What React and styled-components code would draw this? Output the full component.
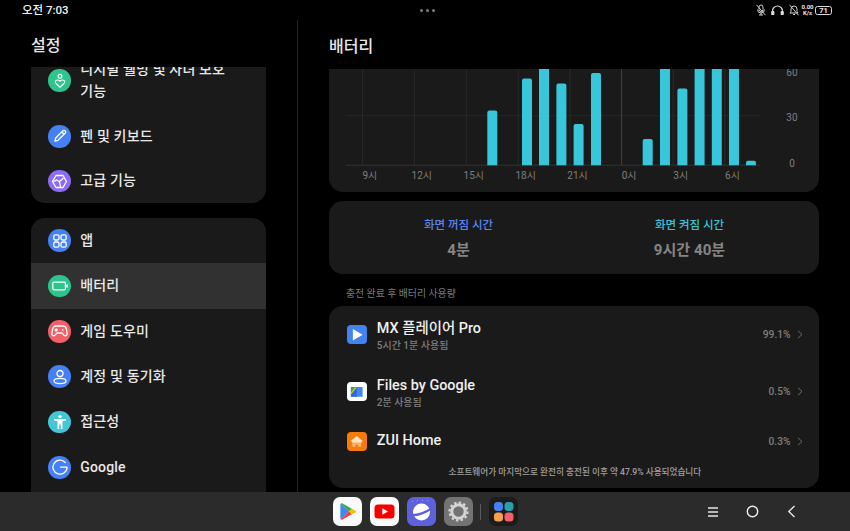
import React from 'react';
import styled, { createGlobalStyle } from 'styled-components';

const Global = createGlobalStyle`
  html, body { margin: 0; padding: 0; background: #000; }
  body { font-family: Roboto, "Noto Sans CJK KR", sans-serif; color: #fff; }
  * { box-sizing: border-box; }
`;

const Screen = styled.div`
  width: 850px; height: 531px; overflow: hidden; background: #000;
  display: flex; flex-direction: column;
`;
const StatusBar = styled.div`
  height: 20px; flex: none; display: grid; grid-template-columns: 1fr auto 1fr; align-items: center;
  padding: 0 18px 0 22px;
`;
const Clock = styled.div`font-size: 11.5px; font-weight: 500; color: #f2f2f2; line-height: 20px;`;
const Dots = styled.div`
  display: flex; gap: 3px; margin-top: 1px;
  span { width: 3px; height: 3px; border-radius: 50%; background: #7c7c7c; }
`;
const StatusIcons = styled.div`display: flex; align-items: center; justify-content: flex-end; gap: 4px;`;
const Speed = styled.div`
  font-size: 6px; font-weight: 700; line-height: 6px; text-align: center; color: #e6e6e6; width: 14px; margin: 0 -3.5px 0 -3.5px;
`;
const BatteryBox = styled.div`
  width: 17px; height: 9px; border: 1px solid #dcdcdc; border-radius: 2.5px;
  font-size: 7.5px; font-weight: 700; line-height: 7px; text-align: center; color: #eee;
`;

const Main = styled.div`flex: 1; min-height: 0; display: flex;`;
const Sidebar = styled.div`
  width: 298px; flex: none; border-right: 1px solid #232323; padding-left: 31px; display: flex; flex-direction: column;
`;
const PageTitle = styled.div`
  height: ${p => p.$h}px; flex: none; display: flex; align-items: center; font-size: 16px; font-weight: 500; color: #e8e8e8;
`;
const SideScroll = styled.div`flex: 1; min-height: 0; overflow: hidden; width: 235px;`;
const SideInner = styled.div`margin-top: -19.3px; display: flex; flex-direction: column; gap: 14.7px;`;
const SideCard = styled.div`background: #1a1a1a; border-radius: 14px; overflow: hidden; flex: none;`;
const SideRow = styled.div`
  display: flex; align-items: center; gap: 9.5px; padding: 0 20px 0 17.3px;
  height: ${p => p.$h || 45.33}px;
  background: ${p => p.$active ? '#313131' : 'transparent'};
`;
const RoundIcon = styled.div`
  width: 22.5px; height: 22.5px; border-radius: 50%; flex: none; background: ${p => p.$c};
  display: flex; align-items: center; justify-content: center;
`;
const SideLabel = styled.div`font-size: 14px; font-weight: 500; color: #e9e9e9; line-height: 21.5px; letter-spacing: 0.15px;`;

const Content = styled.div`flex: 1; min-width: 0; padding: 0 31px; display: flex; flex-direction: column;`;
const ChartCard = styled.div`
  height: 122.7px; flex: none; background: #1a1a1a; border-radius: 0 0 14px 14px; overflow: hidden; margin-bottom: 9px;
  svg { display: block; }
  text { font-family: Roboto, "Noto Sans CJK KR", sans-serif; font-size: 10px; fill: #7f7f7f; }
`;
const StatsCard = styled.div`
  height: 72.7px; flex: none; background: #1a1a1a; border-radius: 14px; padding: 0 14px;
  display: grid; grid-template-columns: 1fr 1fr; align-items: center;
`;
const Stat = styled.div`text-align: center; display: flex; flex-direction: column; gap: 5px; margin-top: 4px;`;
const StatLabel = styled.div`font-size: 11.5px; font-weight: 500; line-height: 17px; color: ${p => p.$c};`;
const StatValue = styled.div`font-size: 15.1px; font-weight: 700; line-height: 22px; color: #858585;`;
const Caption = styled.div`
  height: 32.3px; flex: none; padding: 6px 0 0 17px; display: flex; align-items: center; font-size: 9.9px; color: #7d7d7d;
`;
const ListCard = styled.div`height: 182px; flex: none; background: #1a1a1a; border-radius: 14px; padding: 0 16.5px 0 18.3px;`;
const AppRow = styled.div`display: flex; align-items: center; height: ${p => p.$h}px;`;
const AppIcon = styled.div`
  width: 19.5px; height: 19.5px; border-radius: 4px; flex: none; overflow: hidden; background: ${p => p.$c};
  svg { display: block; }
`;
const AppText = styled.div`margin-left: 10px; flex: 1; padding-top: ${p => p.$pt || 0}px;`;
const AppName = styled.div`font-size: 14.4px; font-weight: 500; line-height: 18px; color: #f0f0f0;`;
const AppSub = styled.div`font-size: 10px; line-height: 15px; color: #7e7e7e; font-weight: 500;`;
const Percent = styled.div`font-size: 10.2px; font-weight: 500; color: #7e7e7e; margin-right: 6px;`;
const Footnote = styled.div`font-size: 8.65px; text-align: center; color: #a0a0a0; line-height: 18px; font-weight: 500;`;

const BottomBar = styled.div`
  height: 39px; flex: none; background: #2b2b2b; display: flex; align-items: center; padding: 0 51px 0 332.7px;
`;
const Dock = styled.div`display: flex; align-items: center; gap: 8px;`;
const DockIcon = styled.div`
  width: 29px; height: 29px; border-radius: 7px; flex: none; overflow: hidden; background: ${p => p.$c};
  svg { display: block; }
`;
const DockSep = styled.div`width: 1px; height: 16px; background: #5a5a5a; margin-left: -1px;`;
const NavGroup = styled.div`margin-left: auto; display: flex; align-items: center; gap: 27px;`;

const S = { fill: 'none', stroke: '#fff', strokeWidth: 1.2, strokeLinecap: 'round', strokeLinejoin: 'round' };

const sideIcons = {
  wellbeing: <svg width="16" height="16" viewBox="0 0 16 16" {...S}><circle cx="8" cy="3.2" r="1.9" /><path d="M8 14.2 3.9 10.2C2 8 4.9 5.6 8 8.2c3.1-2.6 6 -.2 4.1 2z" /></svg>,
  pen: <svg width="16" height="16" viewBox="0 0 16 16" {...S} strokeWidth="1.3"><path d="M3 13l.7-3L11 2.7a1.4 1.4 0 0 1 2 0l.3.3a1.4 1.4 0 0 1 0 2L6 12.3z" /><path d="M9.8 4l2.2 2.2" /></svg>,
  cube: <svg width="17" height="17" viewBox="0 0 17 17" {...S} strokeWidth="1.3"><path d="M5 2.5h7l3.5 6-3.5 6H5l-3.5-6z" /><path d="M5.500 7 8.500 8.500 12 5.500M8.500 8.500 9.500 14M5.500 7 3 8.500" /></svg>,
  apps: <svg width="16" height="16" viewBox="0 0 16 16" {...S} strokeWidth="1.3"><rect x="1.8" y="1.8" width="5.2" height="5.2" rx="1.5" /><rect x="9" y="1.8" width="5.2" height="5.2" rx="1.5" /><rect x="1.8" y="9" width="5.2" height="5.2" rx="1.5" /><rect x="9" y="9" width="5.2" height="5.2" rx="1.5" /></svg>,
  battery: <svg width="16" height="12" viewBox="0 0 16 12" {...S} strokeWidth="1.2"><rect x=".8" y="2.2" width="12.6" height="7.6" rx="1.2" /><path d="M15 5v2" strokeWidth="1.5" /></svg>,
  game: <svg width="17" height="15" viewBox="0 0 17 15" {...S} strokeWidth="1.3"><path d="M5 2h7c2 0 3.2 1.5 3.6 4l.5 3.5c.3 2-2 3-3.2 1.6L11 9H6l-1.900 2.100C2.900 12.500.6 11.500.9 9.500L1.400 6C1.800 3.500 3 2 5 2z" /><path d="M5.200 4.800v2.400M4 6h2.400" /><path d="M11.500 6h.6" /></svg>,
  person: <svg width="16" height="16" viewBox="0 0 16 16" {...S} strokeWidth="1.3"><circle cx="8" cy="4.500" r="3" /><ellipse cx="8" cy="12" rx="6" ry="2.600" /></svg>,
  access: <svg width="16" height="16" viewBox="0 0 16 16"><circle cx="8" cy="2.600" r="1.700" fill="#fff" /><path d="M2 5h12v1.500l-3.500.8V15H8.800v-4.500H7.200V15H5.500V7.300L2 6.500z" fill="#fff" /></svg>,
  google: <svg width="18" height="18" viewBox="0 0 18 18" {...S} strokeWidth="1.300"><path d="M14.200 4.500A7 7 0 1 0 16 9.200H9.500" /></svg>,
};

const bars = [
  [487.3, 110.7], [522, 78.7], [539, 60], [556.4, 83.7], [573.6, 124.3], [591, 73.3],
  [642.7, 139.3], [660, 60], [677.4, 88.7], [694.6, 60], [711.8, 60], [729, 60], [746, 161],
];
const grid = [362.4, 414.3, 466.3, 518.2, 570, 621.6, 673.2, 725];
const hours = ['9시', '12시', '15시', '18시', '21시', '0시', '3시', '6시'];
const ox = 329, oy = 69.3;

function Chart() {
  return (
    <svg width="490" height="122.7" viewBox="0 0 490 122.7">
      <path d={`M${345.6 - ox} ${116 - oy}H${759.5 - ox}`} stroke="#262626" strokeWidth="1" />
      {grid.map((x, i) => (
        <path key={x} d={`M${x - ox} 0V${165.5 - oy}`} stroke={i === 5 ? '#444' : '#2a2a2a'} strokeWidth="1" />
      ))}
      <path d={`M${345.6 - ox} ${165.5 - oy}H${759.5 - ox}`} stroke="#343434" strokeWidth="1" />
      {bars.map(([x, top]) => {
        const y = top - oy, h = 165.5 - top;
        return <path key={x} d={`M${x - ox} ${y + h}V${y + 2}q0-2 2-2h6q2 0 2 2V${y + h}z`} fill="#37c6da" />;
      })}
      {hours.map((t, i) => (
        <text key={t} x={grid[i] - ox + 7.5} y={179 - oy} textAnchor="middle">{t}</text>
      ))}
      <text x={792 - ox} y={76 - oy} textAnchor="middle">60</text>
      <text x={792 - ox} y={121.5 - oy} textAnchor="middle">30</text>
      <text x={792 - ox} y={167.5 - oy} textAnchor="middle">0</text>
    </svg>
  );
}

const MutedMic = () => (
  <svg width="12" height="12" viewBox="0 0 12 12" fill="none" stroke="#cfcfcf" strokeWidth="1"><rect x="4" y="1" width="4" height="6.500" rx="2" /><path d="M2.500 5.500a3.500 3.500 0 0 0 7 0M6 9v2M4 11h4M1.500 .8l9 10.400" /></svg>
);
const Headset = () => (
  <svg width="13" height="12" viewBox="0 0 13 12" fill="none" stroke="#dcdcdc" strokeWidth="1.200"><path d="M1.500 9V7a5 5 0 0 1 10 0v2" /><rect x=".8" y="7.500" width="2" height="3" rx=".6" fill="#dcdcdc" /><rect x="10.200" y="7.500" width="2" height="3" rx=".6" fill="#dcdcdc" /></svg>
);
const BellOff = () => (
  <svg width="12" height="12" viewBox="0 0 12 12" fill="none" stroke="#cfcfcf" strokeWidth="1"><path d="M2 9h8L9 7.500V5a3 3 0 0 0-6 0v2.500zM5 10.500h2M1.500 .8l9 10.400" /></svg>
);

function Chevron() {
  return (
    <svg width="6" height="9" viewBox="0 0 6 9" fill="none" stroke="#6e6e6e" strokeWidth="1"><path d="M1 .8 5 4.500 1 8.200" /></svg>
  );
}

export default function App() {
  return (
    <Screen>
      <Global />
      <StatusBar>
        <Clock>오전 7:03</Clock>
        <Dots><span /><span /><span /></Dots>
        <StatusIcons>
          <MutedMic /><Headset /><BellOff />
          <Speed>0.00<br />K/s</Speed>
          <BatteryBox>71</BatteryBox>
        </StatusIcons>
      </StatusBar>
      <Main>
        <Sidebar>
          <PageTitle $h={47}>설정</PageTitle>
          <SideScroll>
            <SideInner>
              <SideCard>
                <SideRow $h={66}>
                  <RoundIcon $c="#2dc48d">{sideIcons.wellbeing}</RoundIcon>
                  <SideLabel>디지털 웰빙 및 자녀 보호<br />기능</SideLabel>
                </SideRow>
                <SideRow>
                  <RoundIcon $c="#4680f5">{sideIcons.pen}</RoundIcon>
                  <SideLabel>펜 및 키보드</SideLabel>
                </SideRow>
                <SideRow $h={44.3}>
                  <RoundIcon $c="#8c6cf5">{sideIcons.cube}</RoundIcon>
                  <SideLabel>고급 기능</SideLabel>
                </SideRow>
              </SideCard>
              <SideCard>
                <SideRow><RoundIcon $c="#4680f5">{sideIcons.apps}</RoundIcon><SideLabel>앱</SideLabel></SideRow>
                <SideRow $active><RoundIcon $c="#2dc48d">{sideIcons.battery}</RoundIcon><SideLabel>배터리</SideLabel></SideRow>
                <SideRow><RoundIcon $c="#f4606a">{sideIcons.game}</RoundIcon><SideLabel>게임 도우미</SideLabel></SideRow>
                <SideRow><RoundIcon $c="#4680f5">{sideIcons.person}</RoundIcon><SideLabel>계정 및 동기화</SideLabel></SideRow>
                <SideRow><RoundIcon $c="#42c6d8">{sideIcons.access}</RoundIcon><SideLabel>접근성</SideLabel></SideRow>
                <SideRow><RoundIcon $c="#4680f5">{sideIcons.google}</RoundIcon><SideLabel>Google</SideLabel></SideRow>
                <SideRow />
              </SideCard>
            </SideInner>
          </SideScroll>
        </Sidebar>
        <Content>
          <PageTitle $h={49.3}>배터리</PageTitle>
          <ChartCard><Chart /></ChartCard>
          <StatsCard>
            <Stat><StatLabel $c="#5b86f5">화면 꺼짐 시간</StatLabel><StatValue>4분</StatValue></Stat>
            <Stat><StatLabel $c="#3cc4d6">화면 켜짐 시간</StatLabel><StatValue>9시간 40분</StatValue></Stat>
          </StatsCard>
          <Caption>충전 완료 후 배터리 사용량</Caption>
          <ListCard>
            <AppRow $h={57}>
              <AppIcon $c="#4283ee">
                <svg width="19.5" height="19.5" viewBox="0 0 20 20"><path d="M6 4v12l10-6z" fill="#fff" /></svg>
              </AppIcon>
              <AppText $pt={4}><AppName>MX 플레이어 Pro</AppName><AppSub>5시간 1분 사용됨</AppSub></AppText>
              <Percent>99.1%</Percent>
              <Chevron />
            </AppRow>
            <AppRow $h={57}>
              <AppIcon $c="#fff">
                <svg width="19.5" height="19.5" viewBox="0 0 20 20">
                  <path d="M4 5h12v10H4z" fill="#4285f4" />
                  <path d="M4 5h5l1 1v0L4 13z" fill="#34a853" />
                  <path d="M8 6l2 0-6 7v-2z" fill="#fbbc04" />
                  <path d="M4 13l6-7v9H4z" fill="#3367d6" />
                </svg>
              </AppIcon>
              <AppText $pt={4}><AppName>Files by Google</AppName><AppSub>2분 사용됨</AppSub></AppText>
              <Percent>0.5%</Percent>
              <Chevron />
            </AppRow>
            <AppRow $h={43}>
              <AppIcon $c="#f57c0a">
                <svg width="19.5" height="19.5" viewBox="0 0 20 20"><path d="M10 4l6.500 5.500H15V11H5V9.500H3.500z" fill="#ffe2c2" /><path d="M5.500 11.500h9V15h-3.200v-2.200H8.700V15H5.500z" fill="#ffb676" /></svg>
              </AppIcon>
              <AppText><AppName>ZUI Home</AppName></AppText>
              <Percent>0.3%</Percent>
              <Chevron />
            </AppRow>
            <Footnote>소프트웨어가 마지막으로 완전히 충전된 이후 약 47.9% 사용되었습니다</Footnote>
          </ListCard>
        </Content>
      </Main>
      <BottomBar>
        <Dock>
          <DockIcon $c="#fafafa">
            <svg width="29" height="29" viewBox="0 0 29 29">
              <path d="M8 6.500 16 14.500 8 22.500c-.4-.3-.6-.7-.6-1.200V7.700c0-.5.2-.9.600-1.200z" fill="#4285f4" />
              <path d="M8 6.500c.5-.3 1-.3 1.600 0L18.800 11.800 16 14.500z" fill="#34a853" />
              <path d="M18.800 11.800 22.300 13.700c1 .6 1 1.100 0 1.700L18.800 17.300 16 14.500z" fill="#fbbc04" />
              <path d="M8 22.500c.5.300 1 .300 1.600 0L18.800 17.300 16 14.500z" fill="#ea4335" />
            </svg>
          </DockIcon>
          <DockIcon $c="#fafafa">
            <svg width="29" height="29" viewBox="0 0 29 29">
              <rect x="4.500" y="7.500" width="20" height="14" rx="3.500" fill="#f40000" />
              <path d="M12.300 11.200v6.600l5.700-3.300z" fill="#fff" />
            </svg>
          </DockIcon>
          <DockIcon $c="#5d62dc">
            <svg width="29" height="29" viewBox="0 0 29 29">
              <circle cx="14.500" cy="15" r="8.500" fill="#fff" />
              <path d="M3 18C10 19 20 15.500 26.500 9.500" fill="none" stroke="#5d62dc" strokeWidth="2.200" />
              <path d="M5 4.300h1M10 3.500h1M15 3.200h1M20 3.500h1" stroke="#a9abf0" strokeWidth=".8" />
            </svg>
          </DockIcon>
          <DockIcon $c="#737373">
            <svg width="29" height="29" viewBox="0 0 29 29">
              <circle cx="14.500" cy="14.500" r="6.700" fill="none" stroke="#d4d4d4" strokeWidth="3" />
              <circle cx="14.500" cy="14.500" r="9" fill="none" stroke="#d4d4d4" strokeWidth="2.200" strokeDasharray="2.500 2.200" />
            </svg>
          </DockIcon>
          <DockSep />
          <DockIcon $c="#1c1c1c">
            <svg width="29" height="29" viewBox="0 0 29 29">
              <rect x="5" y="5" width="9" height="9" rx="3.500" fill="#4680f5" />
              <rect x="15.500" y="5" width="9" height="9" rx="3.500" fill="#26a0ab" />
              <rect x="5" y="15.500" width="9" height="9" rx="3.500" fill="#f5a04a" />
              <rect x="15.500" y="15.500" width="9" height="9" rx="3.500" fill="#f4606a" />
            </svg>
          </DockIcon>
        </Dock>
        <NavGroup>
          <svg width="12" height="12" viewBox="0 0 12 12" stroke="#e6e6e6" strokeWidth="1.500"><path d="M1 2h10M1 6h10M1 10h10" /></svg>
          <svg width="13" height="13" viewBox="0 0 13 13" fill="none" stroke="#f0f0f0" strokeWidth="1.400"><circle cx="6.500" cy="6.500" r="5.200" /></svg>
          <svg width="13" height="13" viewBox="0 0 13 13" fill="none" stroke="#e6e6e6" strokeWidth="1.400"><path d="M8.500 1 2.800 6.500 8.500 12" /></svg>
        </NavGroup>
      </BottomBar>
    </Screen>
  );
}
